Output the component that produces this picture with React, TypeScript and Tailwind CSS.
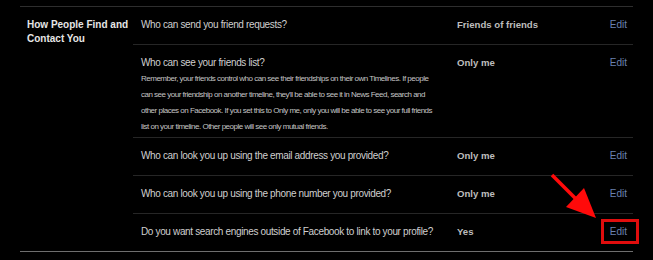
const rows = [
  { q: 'Who can send you friend requests?', v: 'Friends of friends' },
  {
    q: 'Who can see your friends list?',
    v: 'Only me',
    desc: [
      'Remember, your friends control who can see their friendships on their own Timelines. If people',
      "can see your friendship on another timeline, they'll be able to see it in News Feed, search and",
      'other places on Facebook. If you set this to Only me, only you will be able to see your full friends',
      'list on your timeline. Other people will see only mutual friends.',
    ],
  },
  { q: 'Who can look you up using the email address you provided?', v: 'Only me' },
  { q: 'Who can look you up using the phone number you provided?', v: 'Only me' },
  { q: 'Do you want search engines outside of Facebook to link to your profile?', v: 'Yes' },
];

export default function App() {
  return (
    <div
      className="relative w-[653px] h-[260px] bg-black overflow-hidden"
      style={{ fontFamily: '"Liberation Sans", Arial, sans-serif' }}
    >
      <div className="ml-[20px] w-[613px] pt-[6px]">
        <div className="flex border-t border-b border-t-[#2e2e2e] border-b-[#6e6e6e]">
          {/* section label */}
          <div className="w-[113px] pl-[7px] pt-[11px] text-[10px] leading-[14px] font-bold text-[#e6e6e6]">
            How People Find and
            <br />
            Contact You
          </div>

          {/* setting rows */}
          <div className="flex-1">
            {rows.map((r, i) => (
              <div
                key={r.q}
                className={`grid grid-cols-[316px_1fr_auto] pl-[8px] pr-[6px] pt-[11px] ${
                  i > 0 ? 'border-t border-[#262626]' : ''
                } ${r.desc ? 'pb-[2px]' : 'pb-[12px]'}`}
              >
                <div>
                  <div className="text-[10px] leading-[14px] tracking-[-0.35px] text-[#cfcfcf] whitespace-nowrap">
                    {r.q}
                  </div>
                  {r.desc && (
                    <div className="mt-[1px] text-[8px] leading-[16px] tracking-[-0.5px] text-[#c4c4c4] whitespace-nowrap">
                      {r.desc.map((l) => (
                        <div key={l}>{l}</div>
                      ))}
                    </div>
                  )}
                </div>
                <div className="text-[9.6px] leading-[14px] font-bold text-[#bdbdbd] whitespace-nowrap">{r.v}</div>
                <div className="text-[10px] leading-[14px] text-[#6b81b1]">Edit</div>
              </div>
            ))}
          </div>
        </div>
      </div>

      {/* annotation: arrow + box around last Edit */}
      <svg className="absolute left-0 top-0" width="653" height="260" viewBox="0 0 653 260">
        <line x1="552" y1="175" x2="578" y2="201" stroke="#ff0a0a" strokeWidth="3.5" />
        <polygon points="566,207 584,188 596,218" fill="#ff0a0a" />
      </svg>
      <div className="absolute left-[601px] top-[219px] w-[38px] h-[25px] border-[3px] border-[#e00d0d]" />
    </div>
  );
}
